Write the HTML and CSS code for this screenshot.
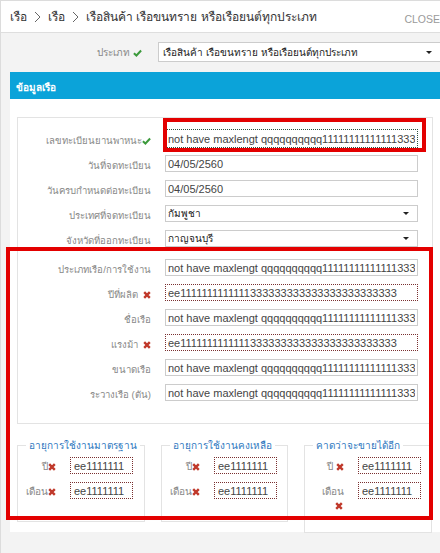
FILE: index.html
```html
<!DOCTYPE html>
<html lang="th">
<head>
<meta charset="utf-8">
<title>เรือ</title>
<link rel="stylesheet" href="styles.css">
</head>
<body>
<div class="app">
  <header class="topbar">
    <div class="crumbs">เรือ<svg class="chev" viewBox="0 0 7 12"><path d="M1 1 L6 6 L1 11" /></svg>เรือ<svg class="chev" viewBox="0 0 7 12"><path d="M1 1 L6 6 L1 11" /></svg>เรือสินค้า เรือขนทราย หรือเรือยนต์ทุกประเภท</div>
    <div class="close">CLOSE</div>
  </header>
  <div class="main">
    <div class="type-row">
      <div class="type-label">ประเภท <svg class="ico-check" viewBox="0 0 10 8"><path d="M1 4.2 L3.8 6.8 L9 1.2" /></svg></div>
      <div class="select select-wide"><span>เรือสินค้า เรือขนทราย หรือเรือยนต์ทุกประเภท</span><i class="caret"></i></div>
    </div>
    <section class="panel">
      <div class="panel-head">ข้อมูลเรือ</div>
      <div class="panel-body">
        <div class="box">
          <div class="row row-first">
            <div class="label">เลขทะเบียนยานพาหนะ<svg class="ico-check" viewBox="0 0 10 8"><path d="M1 4.2 L3.8 6.8 L9 1.2" /></svg></div>
            <input class="field dotted-dark" value="not have maxlengt qqqqqqqqqq11111111111111333">
          </div>
          <div class="row">
            <div class="label">วันที่จดทะเบียน</div>
            <input class="field" value="04/05/2560">
          </div>
          <div class="row">
            <div class="label">วันครบกำหนดต่อทะเบียน</div>
            <input class="field" value="04/05/2560">
          </div>
          <div class="row">
            <div class="label">ประเทศที่จดทะเบียน</div>
            <div class="select field"><span>กัมพูชา</span><i class="caret"></i></div>
          </div>
          <div class="row row-spaced">
            <div class="label">จังหวัดที่ออกทะเบียน</div>
            <div class="select field"><span>กาญจนบุรี</span><i class="caret"></i></div>
          </div>
          <div class="row">
            <div class="label">ประเภทเรือ/การใช้งาน</div>
            <input class="field" value="not have maxlengt qqqqqqqqqq11111111111111333">
          </div>
          <div class="row">
            <div class="label">ปีที่ผลิต <svg class="ico-x" viewBox="0 0 8 8"><path d="M1.2 1.2 L6.8 6.8 M6.8 1.2 L1.2 6.8" /></svg></div>
            <input class="field dotted-err" value="ee1111111111111333333333333333333333333">
          </div>
          <div class="row">
            <div class="label">ชื่อเรือ</div>
            <input class="field" value="not have maxlengt qqqqqqqqqq11111111111111333">
          </div>
          <div class="row">
            <div class="label">แรงม้า <svg class="ico-x" viewBox="0 0 8 8"><path d="M1.2 1.2 L6.8 6.8 M6.8 1.2 L1.2 6.8" /></svg></div>
            <input class="field dotted-err" value="ee1111111111111333333333333333333333333">
          </div>
          <div class="row">
            <div class="label">ขนาดเรือ</div>
            <input class="field" value="not have maxlengt qqqqqqqqqq11111111111111333">
          </div>
          <div class="row">
            <div class="label">ระวางเรือ (ตัน)</div>
            <input class="field" value="not have maxlengt qqqqqqqqqq11111111111111333">
          </div>
        </div>

        <div class="groups">
          <fieldset class="group">
            <legend>อายุการใช้งานมาตรฐาน</legend>
            <div class="grow">
              <div class="glabel">ปี<svg class="ico-x" viewBox="0 0 8 8"><path d="M1.2 1.2 L6.8 6.8 M6.8 1.2 L1.2 6.8" /></svg></div>
              <input class="gfield" value="ee1111111">
            </div>
            <div class="grow">
              <div class="glabel">เดือน<svg class="ico-x" viewBox="0 0 8 8"><path d="M1.2 1.2 L6.8 6.8 M6.8 1.2 L1.2 6.8" /></svg></div>
              <input class="gfield" value="ee1111111">
            </div>
          </fieldset>
          <fieldset class="group">
            <legend>อายุการใช้งานคงเหลือ</legend>
            <div class="grow">
              <div class="glabel">ปี<svg class="ico-x" viewBox="0 0 8 8"><path d="M1.2 1.2 L6.8 6.8 M6.8 1.2 L1.2 6.8" /></svg></div>
              <input class="gfield" value="ee1111111">
            </div>
            <div class="grow">
              <div class="glabel">เดือน<svg class="ico-x" viewBox="0 0 8 8"><path d="M1.2 1.2 L6.8 6.8 M6.8 1.2 L1.2 6.8" /></svg></div>
              <input class="gfield" value="ee1111111">
            </div>
          </fieldset>
          <fieldset class="group group-narrow">
            <legend>คาดว่าจะขายได้อีก</legend>
            <div class="grow">
              <div class="glabel">ปี <svg class="ico-x" viewBox="0 0 8 8"><path d="M1.2 1.2 L6.8 6.8 M6.8 1.2 L1.2 6.8" /></svg></div>
              <input class="gfield" value="ee1111111">
            </div>
            <div class="grow">
              <div class="glabel">เดือน <svg class="ico-x ico-block" viewBox="0 0 8 8"><path d="M1.2 1.2 L6.8 6.8 M6.8 1.2 L1.2 6.8" /></svg></div>
              <input class="gfield" value="ee1111111">
            </div>
          </fieldset>
        </div>
      </div>
    </section>
  </div>
  <div class="mark mark-a"></div>
  <div class="mark mark-b"></div>
</div>
</body>
</html>
```

FILE: styles.css
```css
* { box-sizing: border-box; }
html, body { margin: 0; padding: 0; }
body {
  width: 440px;
  height: 553px;
  overflow: hidden;
  font-family: Tahoma, "Liberation Sans", "Noto Sans", sans-serif;
  color: #333;
  background: #f3f3f3;
}
.app {
  position: relative;
  width: 440px;
  height: 553px;
  border-top: 1px solid #dcdcdc;
  border-left: 1px solid #dcdcdc;
}
.topbar {
  display: flex;
  align-items: center;
  justify-content: space-between;
  height: 32px;
  background: #fff;
  border-bottom: 1px solid #dedede;
  padding-left: 9px;
}
.crumbs {
  font-size: 12px;
  color: #333;
  white-space: nowrap;
  display: flex;
  align-items: center;
}
.chev {
  width: 7px;
  height: 12px;
  margin: 0 7px;
}
.chev path {
  fill: none;
  stroke: #666;
  stroke-width: 1;
}
.close {
  font-family: "Liberation Sans", sans-serif;
  font-size: 10.5px;
  color: #9a9a9a;
  padding-top: 5px;
  margin-right: 0;
  white-space: nowrap;
}
.main {
  padding: 9px 0 0 9px;
}
.type-row {
  display: flex;
  align-items: center;
  height: 20px;
}
.type-label {
  width: 148px;
  text-align: right;
  padding-right: 16px;
  font-size: 10px;
  color: #888;
  white-space: nowrap;
}
.ico-check {
  width: 9px;
  height: 8px;
  vertical-align: -1px;
}
.ico-check path {
  fill: none;
  stroke: #3c9a3c;
  stroke-width: 2.2;
}
.ico-x {
  width: 8px;
  height: 8px;
  vertical-align: -1px;
}
.ico-x path {
  fill: none;
  stroke: #c0392b;
  stroke-width: 2.4;
}
.select {
  display: flex;
  align-items: center;
  justify-content: space-between;
  background: #fff;
  border: 1px solid #ccc;
  font-size: 10px;
  color: #222;
  padding: 0 8px 0 4px;
}
.select-wide {
  flex: 1;
  height: 20px;
  border-right: none;
}
.caret {
  width: 0;
  height: 0;
  border-left: 3px solid transparent;
  border-right: 3px solid transparent;
  border-top: 3px solid #222;
}
.panel {
  margin-top: 10px;
  background: #fff;
  height: 460px;
}
.panel-head {
  height: 27px;
  background: #0ba3d9;
  color: #fff;
  font-size: 10px;
  font-weight: bold;
  padding: 8px 0 0 6px;
}
.panel-body {
  padding: 18px 7px 0 7px;
}
.box {
  border: 1px solid #e3e3e3;
  padding: 11px 14px 22px 0;
}
.row {
  display: flex;
  align-items: center;
  height: 17px;
  margin-bottom: 8px;
}
.row-first {
  height: 19px;
  margin-bottom: 7px;
}
.row-spaced {
  margin-top: 5px;
  margin-bottom: 12px;
}
.row:last-child { margin-bottom: 0; }
.label {
  width: 133px;
  flex: none;
  text-align: right;
  font-size: 9.6px;
  color: #888;
  white-space: nowrap;
  padding-top: 4px;
}
.label .ico-x { margin-left: 2px; }
.field {
  margin-left: 14px;
  width: 253px;
  height: 100%;
  flex: none;
  border: 1px solid #ccc;
  background: #fff;
  font-family: "Liberation Sans", sans-serif;
  font-size: 11px;
  color: #444;
  padding: 0 2px;
  outline: none;
}
.select.field { padding: 0 8px 0 2px; font-size: 10px; color: #222; }
.dotted-dark { border: 1px dotted #2f4f3f; }
.dotted-err { border: 1px dotted #7a3030; }
.groups {
  display: grid;
  grid-template-columns: 128px 127px 128px;
  column-gap: 16px;
  align-items: start;
  margin-top: 14px;
}
.group {
  margin: 0;
  border: 1px solid #e3e3e3;
  padding: 4px 12px 22px 0;
  min-width: 0;
}
.group legend {
  font-size: 10px;
  color: #2e78c0;
  margin-left: 8px;
  padding: 0 3px;
  white-space: nowrap;
}
.grow {
  display: flex;
  align-items: flex-start;
  margin-bottom: 8px;
}
.grow:last-child { margin-bottom: 0; }
.glabel {
  width: 38px;
  flex: none;
  text-align: right;
  font-size: 10px;
  color: #888;
  padding-top: 3px;
  line-height: 14px;
}
.group-narrow .glabel { width: 39px; }
.ico-block { display: block; margin: 3px 1px 0 auto; }
.gfield {
  margin-left: 14px;
  width: 63px;
  height: 17px;
  border: 1px dotted #7a3030;
  background: #fff;
  font-family: "Liberation Sans", sans-serif;
  font-size: 11px;
  color: #444;
  padding: 0 3px;
  outline: none;
}
.mark {
  position: absolute;
  border: 4px solid #e30000;
  pointer-events: none;
}
.mark-a { left: 162px; top: 117px; width: 263px; height: 34px; }
.mark-b { left: 5px; top: 246px; width: 427px; height: 273px; }
```
